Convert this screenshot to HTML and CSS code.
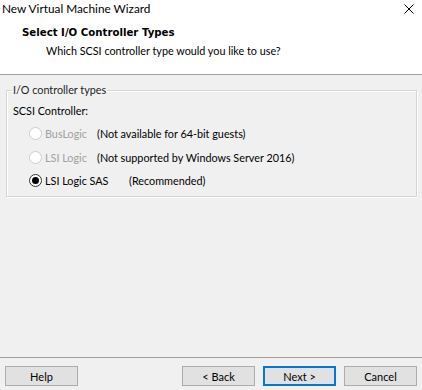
FILE: index.html
```html
<!DOCTYPE html>
<html lang="en">
<head>
    <meta charset="UTF-8">
    <title>New Virtual Machine Wizard</title>
    <link rel="stylesheet" href="styles.css">
</head>
<body>
    <div class="window">
        <div class="top">
            <div class="titlebar">
                <span class="title">New Virtual Machine Wizard</span>
                <svg class="close" width="10" height="10" viewBox="0 0 10 10">
                    <path d="M0.5 0.5 L9.5 9.5 M9.5 0.5 L0.5 9.5" stroke="#000" stroke-width="1"/>
                </svg>
            </div>
            <div class="header">
                <div class="header-title">Select I/O Controller Types</div>
                <div class="header-sub">Which SCSI controller type would you like to use?</div>
            </div>
        </div>

        <div class="content">
            <fieldset class="group">
                <legend>I/O controller types</legend>
                <div class="field-label">SCSI Controller:</div>
                <div class="option disabled">
                    <span class="radio"></span>
                    <span class="opt-name">BusLogic</span>
                    <span class="opt-note">(Not available for 64-bit guests)</span>
                </div>
                <div class="option disabled">
                    <span class="radio"></span>
                    <span class="opt-name">LSI Logic</span>
                    <span class="opt-note">(Not supported by Windows Server 2016)</span>
                </div>
                <div class="option">
                    <span class="radio checked"></span>
                    <span class="opt-name wide">LSI Logic SAS</span>
                    <span class="opt-note">(Recommended)</span>
                </div>
            </fieldset>
        </div>

        <div class="footer">
            <button class="btn">Help</button>
            <div class="nav">
                <button class="btn">&lt; Back</button>
                <button class="btn default">Next &gt;</button>
                <button class="btn">Cancel</button>
            </div>
        </div>
    </div>
</body>
</html>
```

FILE: styles.css
```css
body {
    margin: 0;
    background: #f0f0f0;
    font-family: Lato, sans-serif;
    font-size: 10.8px;
    color: #000;
}
.window {
    display: flex;
    flex-direction: column;
    height: 100vh;
}
.top {
    background: #fff;
    border-bottom: 1px solid #a0a0a0;
}
.titlebar {
    display: flex;
    justify-content: space-between;
    align-items: center;
    height: 18px;
    padding: 0 8px 0 2px;
    line-height: 16px;
    font-size: 11.8px;
}
.close {
    margin-top: -1px;
}
.header {
    padding: 7px 0 15px 22px;
    line-height: 16px;
}
.header-title {
    font-family: "DejaVu Sans", sans-serif;
    font-size: 10.2px;
    font-weight: bold;
}
.header-sub {
    margin-top: 2px;
    padding-left: 24px;
}
.content {
    flex: 1;
    padding: 7px 5px 0 6px;
}
.group {
    margin: 0;
    padding: 5px 6px 3px 6px;
    border: 1px solid #d5d5d5;
    box-shadow: inset 1px 1px 0 #fff, 1px 1px 0 #fff;
}
.group legend {
    padding: 0 1px;
    margin-left: -1px;
    line-height: 16px;
    color: #222;
}
.field-label {
    line-height: 16px;
    margin-bottom: 3px;
}
.option {
    display: flex;
    align-items: center;
    height: 23.5px;
    padding-left: 16px;
}
.radio {
    width: 11px;
    height: 11px;
    border: 1px solid #333;
    border-radius: 50%;
    background: #fff;
    margin-right: 3px;
    display: flex;
    align-items: center;
    justify-content: center;
}
.radio.checked::after {
    content: "";
    width: 7px;
    height: 7px;
    border-radius: 50%;
    background: #000;
}
.disabled .radio {
    border-color: #cccccc;
}
.disabled .opt-name {
    color: #a0a0a0;
}
.opt-name {
    width: 52px;
}
.opt-name.wide {
    width: 84px;
}
.footer {
    border-top: 1px solid #a0a0a0;
    display: flex;
    justify-content: space-between;
    padding: 8px 5px 4px 5px;
}
.nav {
    display: flex;
    gap: 8px;
}
.btn {
    width: 73px;
    height: 20px;
    padding: 0;
    background: #e1e1e1;
    border: 1px solid #adadad;
    font-family: Lato, sans-serif;
    font-size: 11px;
    color: #000;
}
.btn.default {
    border: 2px solid #0078d7;
}
```
